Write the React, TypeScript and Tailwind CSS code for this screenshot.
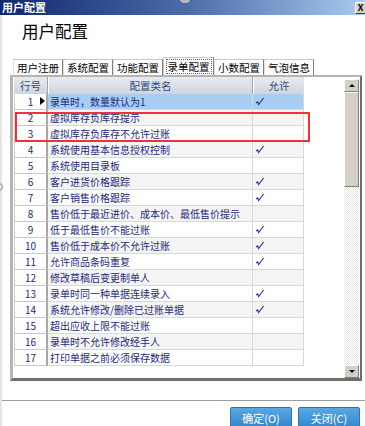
import React from "react";

type ConfigRow = {
  no: number;
  name: string;
  allow: boolean;
};

const rows: ConfigRow[] = [
  { no: 1, name: "录单时，数量默认为1", allow: true },
  { no: 2, name: "虚拟库存负库存提示", allow: false },
  { no: 3, name: "虚拟库存负库存不允许过账", allow: false },
  { no: 4, name: "系统使用基本信息授权控制", allow: true },
  { no: 5, name: "系统使用目录板", allow: false },
  { no: 6, name: "客户进货价格跟踪", allow: true },
  { no: 7, name: "客户销售价格跟踪", allow: true },
  { no: 8, name: "售价低于最近进价、成本价、最低售价提示", allow: false },
  { no: 9, name: "低于最低售价不能过账", allow: true },
  { no: 10, name: "售价低于成本价不允许过账", allow: true },
  { no: 11, name: "允许商品条码重复", allow: true },
  { no: 12, name: "修改草稿后变更制单人", allow: false },
  { no: 13, name: "录单时同一种单据连续录入", allow: true },
  { no: 14, name: "系统允许修改/删除已过账单据", allow: true },
  { no: 15, name: "超出应收上限不能过账", allow: false },
  { no: 16, name: "录单时不允许修改经手人", allow: false },
  { no: 17, name: "打印单据之前必须保存数据", allow: false },
];

const tabs = ["用户注册", "系统配置", "功能配置", "录单配置", "小数配置", "气泡信息"];

const Check = () => (
  <svg width="10" height="9" viewBox="0 0 10 9">
    <polyline
      points="1,6 2.6,4.8 3.6,7.6 8.6,1"
      fill="none"
      stroke="#23318f"
      strokeWidth="1.1"
    />
  </svg>
);

const ScrollButton = ({ up }: { up: boolean }) => (
  <div className="flex h-[13px] w-full items-center justify-center border border-t-white border-l-white border-r-[#808080] border-b-[#808080] bg-[#d4d0c8]">
    <div
      className={
        up
          ? "h-0 w-0 border-x-[3px] border-b-[3px] border-x-transparent border-b-black"
          : "h-0 w-0 border-x-[3px] border-t-[3px] border-x-transparent border-t-black"
      }
    />
  </div>
);

export default function App() {
  return (
    <div className="relative h-[426px] w-[365px] overflow-hidden bg-white font-['Noto_Sans_CJK_SC',sans-serif]">
      {/* title bar */}
      <div className="flex h-[15px] items-center justify-between bg-gradient-to-r from-[#10286e] via-[#4a6aa8] to-[#a9cbef]">
        <span className="pl-[2px] text-[11px] font-bold leading-none text-white">用户配置</span>
        <div className="mr-[-1px] flex h-[12px] w-[11px] items-center justify-center border border-t-white border-l-white border-r-[#404040] border-b-[#404040] bg-[#d4d0c8] text-[9px] font-bold leading-none text-black">
          X
        </div>
      </div>

      <div className="border-l-[2px] border-[#e4e4e4]">
        {/* heading */}
        <div className="h-[42px] pl-[20px] pt-[5px] text-[16.5px] leading-[22px] text-black">用户配置</div>

        {/* tabs */}
        <div className="ml-[11px] flex h-[18px] items-end">
          {tabs.map((t) => {
            const active = t === "录单配置";
            return (
              <div
                key={t}
                className={
                  active
                    ? "flex h-[18px] w-[51px] items-center justify-center border-l border-r border-t border-l-[#c8c8c8] border-r-[#808080] border-t-[#c8c8c8] bg-white"
                    : "flex h-[16px] w-[50px] items-center justify-center border-l border-r border-t border-l-[#e0e0e0] border-r-[#808080] border-t-[#c8c8c8] bg-white"
                }
              >
                <span
                  className={
                    active
                      ? "border border-dotted border-[#606060] px-[1px] text-[10.5px] leading-[13px] text-black"
                      : "text-[10.5px] leading-[13px] text-black"
                  }
                >
                  {t}
                </span>
              </div>
            );
          })}
        </div>

        {/* grid frame */}
        <div className="ml-[8px] flex h-[306px] w-[352px] border-b-[3px] border-l-[3px] border-r-[2px] border-t-[2px] border-b-[#6e6e6e] border-l-[#b4b4b4] border-r-[#6e6e6e] border-t-[#b4b4b4]">
          <div className="relative w-[291px] pl-[1px]">
            {/* header */}
            <div className="flex h-[17px] bg-gradient-to-b from-[#e8ebf0] to-[#cfd5de] text-[10.5px] leading-[17px] text-[#2b4a7e]">
              <div className="w-[34px] border-r border-r-[#9aa4b2] text-center">行号</div>
              <div className="w-[205px] border-l border-r border-l-white border-r-[#9aa4b2] text-center">配置类名</div>
              <div className="w-[51px] border-l border-l-white text-center">允许</div>
            </div>
            {/* rows */}
            {rows.map((r) => {
              const selected = r.no === 1;
              const rowBg = selected ? "bg-[#a7cdf3]" : r.no % 2 === 0 ? "bg-[#f4f4f4]" : "bg-white";
              return (
                <div key={r.no} className="flex h-[16px] text-[10px] leading-[15px] text-[#1d2a7c]">
                  <div className="relative w-[34px] border-b border-l border-r-2 border-b-[#c8c8c8] border-l-[#d0d0d0] border-r-[#a8a8a8] bg-white text-center">
                    {r.no}
                    {selected && (
                      <div className="absolute right-[1px] top-[3px] h-0 w-0 border-y-[4.5px] border-l-[5px] border-y-transparent border-l-black" />
                    )}
                  </div>
                  <div className={`w-[205px] overflow-hidden whitespace-nowrap border-b border-r border-[#d8d8d8] pl-[2px] ${rowBg}`}>
                    {r.name}
                  </div>
                  <div className={`flex w-[51px] items-center border-b border-r border-[#d8d8d8] pl-[2px] ${rowBg}`}>
                    {r.allow && <Check />}
                  </div>
                </div>
              );
            })}
            {/* highlighted rows 2-3 */}
            <div className="absolute left-[2px] top-[35px] h-[30px] w-[295px] border-2 border-[#f03236]" />
          </div>
          <div className="flex-1" />
          {/* scrollbar */}
          <div className="mr-[1px] flex w-[15px] flex-col">
            <div className="h-[2px]" />
            <ScrollButton up />
            <div className="h-[95px] border border-t-white border-l-white border-r-[#808080] border-b-[#808080] bg-[#d4d0c8]" />
            <div className="flex-1 bg-[repeating-conic-gradient(#e6e6e6_0%_25%,#ffffff_0%_50%)] bg-[length:2px_2px]" />
            <ScrollButton up={false} />
          </div>
        </div>

        {/* footer */}
        <div className="h-[19px]" />
        <div className="flex h-[30px] justify-end gap-[6px] border-t border-[#9c9c9c] pr-[5px] pt-[6px]">
          <div className="flex h-[22px] w-[62px] items-start justify-center rounded-[2px] border border-[#2d75b4] bg-gradient-to-b from-[#5aa8e2] to-[#2f86cb] pt-[3px] text-[11px] leading-[14px] text-white">
            确定(O)
          </div>
          <div className="flex h-[22px] w-[62px] items-start justify-center rounded-[2px] border border-[#2d75b4] bg-gradient-to-b from-[#5aa8e2] to-[#2f86cb] pt-[3px] text-[11px] leading-[14px] text-white">
            关闭(C)
          </div>
        </div>
      </div>

      {/* stray window fragments at the edges */}
      <div className="absolute left-[180px] top-[-5px] h-[8px] w-[10px] rounded-full bg-[#b8b8b8]" />
      <div className="absolute left-[-5px] top-[183px] h-[8px] w-[8px] rounded-full border border-[#909090]" />
    </div>
  );
}
